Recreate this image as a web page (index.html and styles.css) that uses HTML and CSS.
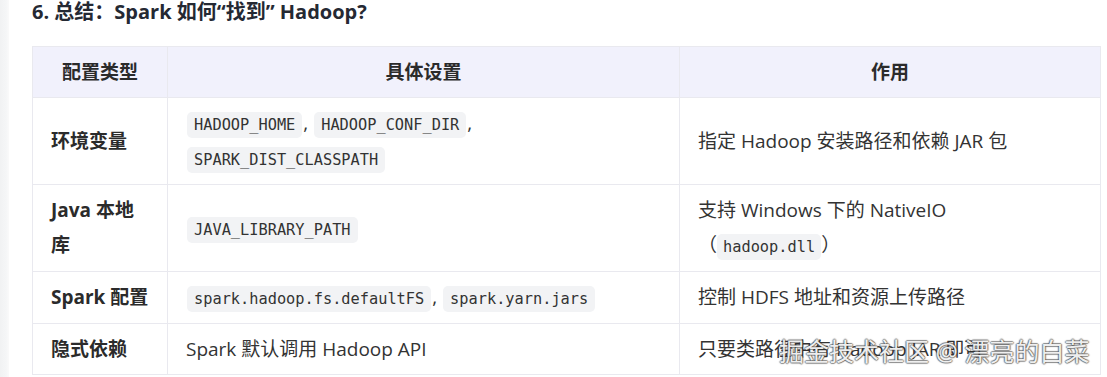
FILE: index.html
```html
<!DOCTYPE html>
<html lang="zh-CN">
<head>
<meta charset="utf-8">
<title>Spark 如何找到 Hadoop</title>
<link rel="stylesheet" href="styles.css">
</head>
<body>
<div class="page">
  <div class="rail"></div>
  <main class="content">
    <h3 class="title">6. 总结：Spark 如何“找到” Hadoop?</h3>
    <table class="summary">
      <colgroup>
        <col class="c1">
        <col class="c2">
        <col class="c3">
      </colgroup>
      <thead>
        <tr><th>配置类型</th><th>具体设置</th><th>作用</th></tr>
      </thead>
      <tbody>
        <tr>
          <td class="kind">环境变量</td>
          <td><code>HADOOP_HOME</code>, <code>HADOOP_CONF_DIR</code>, <code>SPARK_DIST_CLASSPATH</code></td>
          <td>指定 Hadoop 安装路径和依赖 JAR 包</td>
        </tr>
        <tr>
          <td class="kind">Java 本地库</td>
          <td><code>JAVA_LIBRARY_PATH</code></td>
          <td>支持 Windows 下的 NativeIO （<code class="inline">hadoop.dll</code>）</td>
        </tr>
        <tr>
          <td class="kind">Spark 配置</td>
          <td><code>spark.hadoop.fs.defaultFS</code>, <code>spark.yarn.jars</code></td>
          <td>控制 HDFS 地址和资源上传路径</td>
        </tr>
        <tr class="last">
          <td class="kind">隐式依赖</td>
          <td>Spark 默认调用 Hadoop API</td>
          <td>只要类路径中有 Hadoop JAR 即可</td>
        </tr>
      </tbody>
    </table>
    <div class="watermark">掘金技术社区 @ 漂亮的白菜</div>
  </main>
</div>
</body>
</html>
```
FILE: styles.css
```css
html, body {
  margin: 0;
  padding: 0;
  background: #ffffff;
}

body {
  font-family: "Open Sans", "Noto Sans CJK SC", sans-serif;
  color: #333333;
  width: 1107px;
  height: 377px;
  overflow: hidden;
}

.page {
  display: flex;
  height: 377px;
}

.rail {
  width: 9px;
  flex: none;
  background: linear-gradient(to right, #f1f2f3, #f5f6f7 70%, #fafafa);
}

.content {
  position: relative;
  flex: 1;
  padding: 0 0 0 23px;
}

.title {
  margin: 0 0 22px;
  font-size: 20px;
  line-height: 24px;
  font-weight: 700;
  color: #252933;
}

.summary {
  width: 1068px;
  border-collapse: collapse;
  table-layout: fixed;
  font-size: 19px;
}

.c1 { width: 135px; }
.c2 { width: 512px; }
.c3 { width: 421px; }

.summary th,
.summary td {
  border: 1px solid #e9e9ef;
  padding: 8px 18px;
  line-height: 35px;
  vertical-align: middle;
  text-align: left;
}

.summary th {
  background: #f1f1fc;
  font-weight: 700;
  text-align: center;
  color: #2b2b2b;
  padding-top: 8px;
  padding-bottom: 7px;
}

.summary .last td {
  padding-bottom: 7px;
}

.summary td.kind {
  font-weight: 700;
  color: #2b2b2b;
}

.summary code {
  font-family: "DejaVu Sans Mono", "Liberation Mono", monospace;
  font-size: 15.3px;
  color: #333333;
  background: #f2f3f5;
  border-radius: 5px;
  padding: 4px 7px;
  margin: 0 1px;
  line-height: 17px;
}

.summary code.inline {
  margin: 0;
  padding: 4px 6px;
}

.watermark {
  position: absolute;
  left: 770px;
  top: 334px;
  font-size: 25px;
  line-height: 34px;
  color: rgba(255, 255, 255, 0.92);
  text-shadow:
    1px 0 1px rgba(60, 60, 60, 0.55),
    -1px 0 1px rgba(60, 60, 60, 0.55),
    0 1px 1px rgba(60, 60, 60, 0.55),
    0 -1px 1px rgba(60, 60, 60, 0.55);
  white-space: nowrap;
  pointer-events: none;
}
```
